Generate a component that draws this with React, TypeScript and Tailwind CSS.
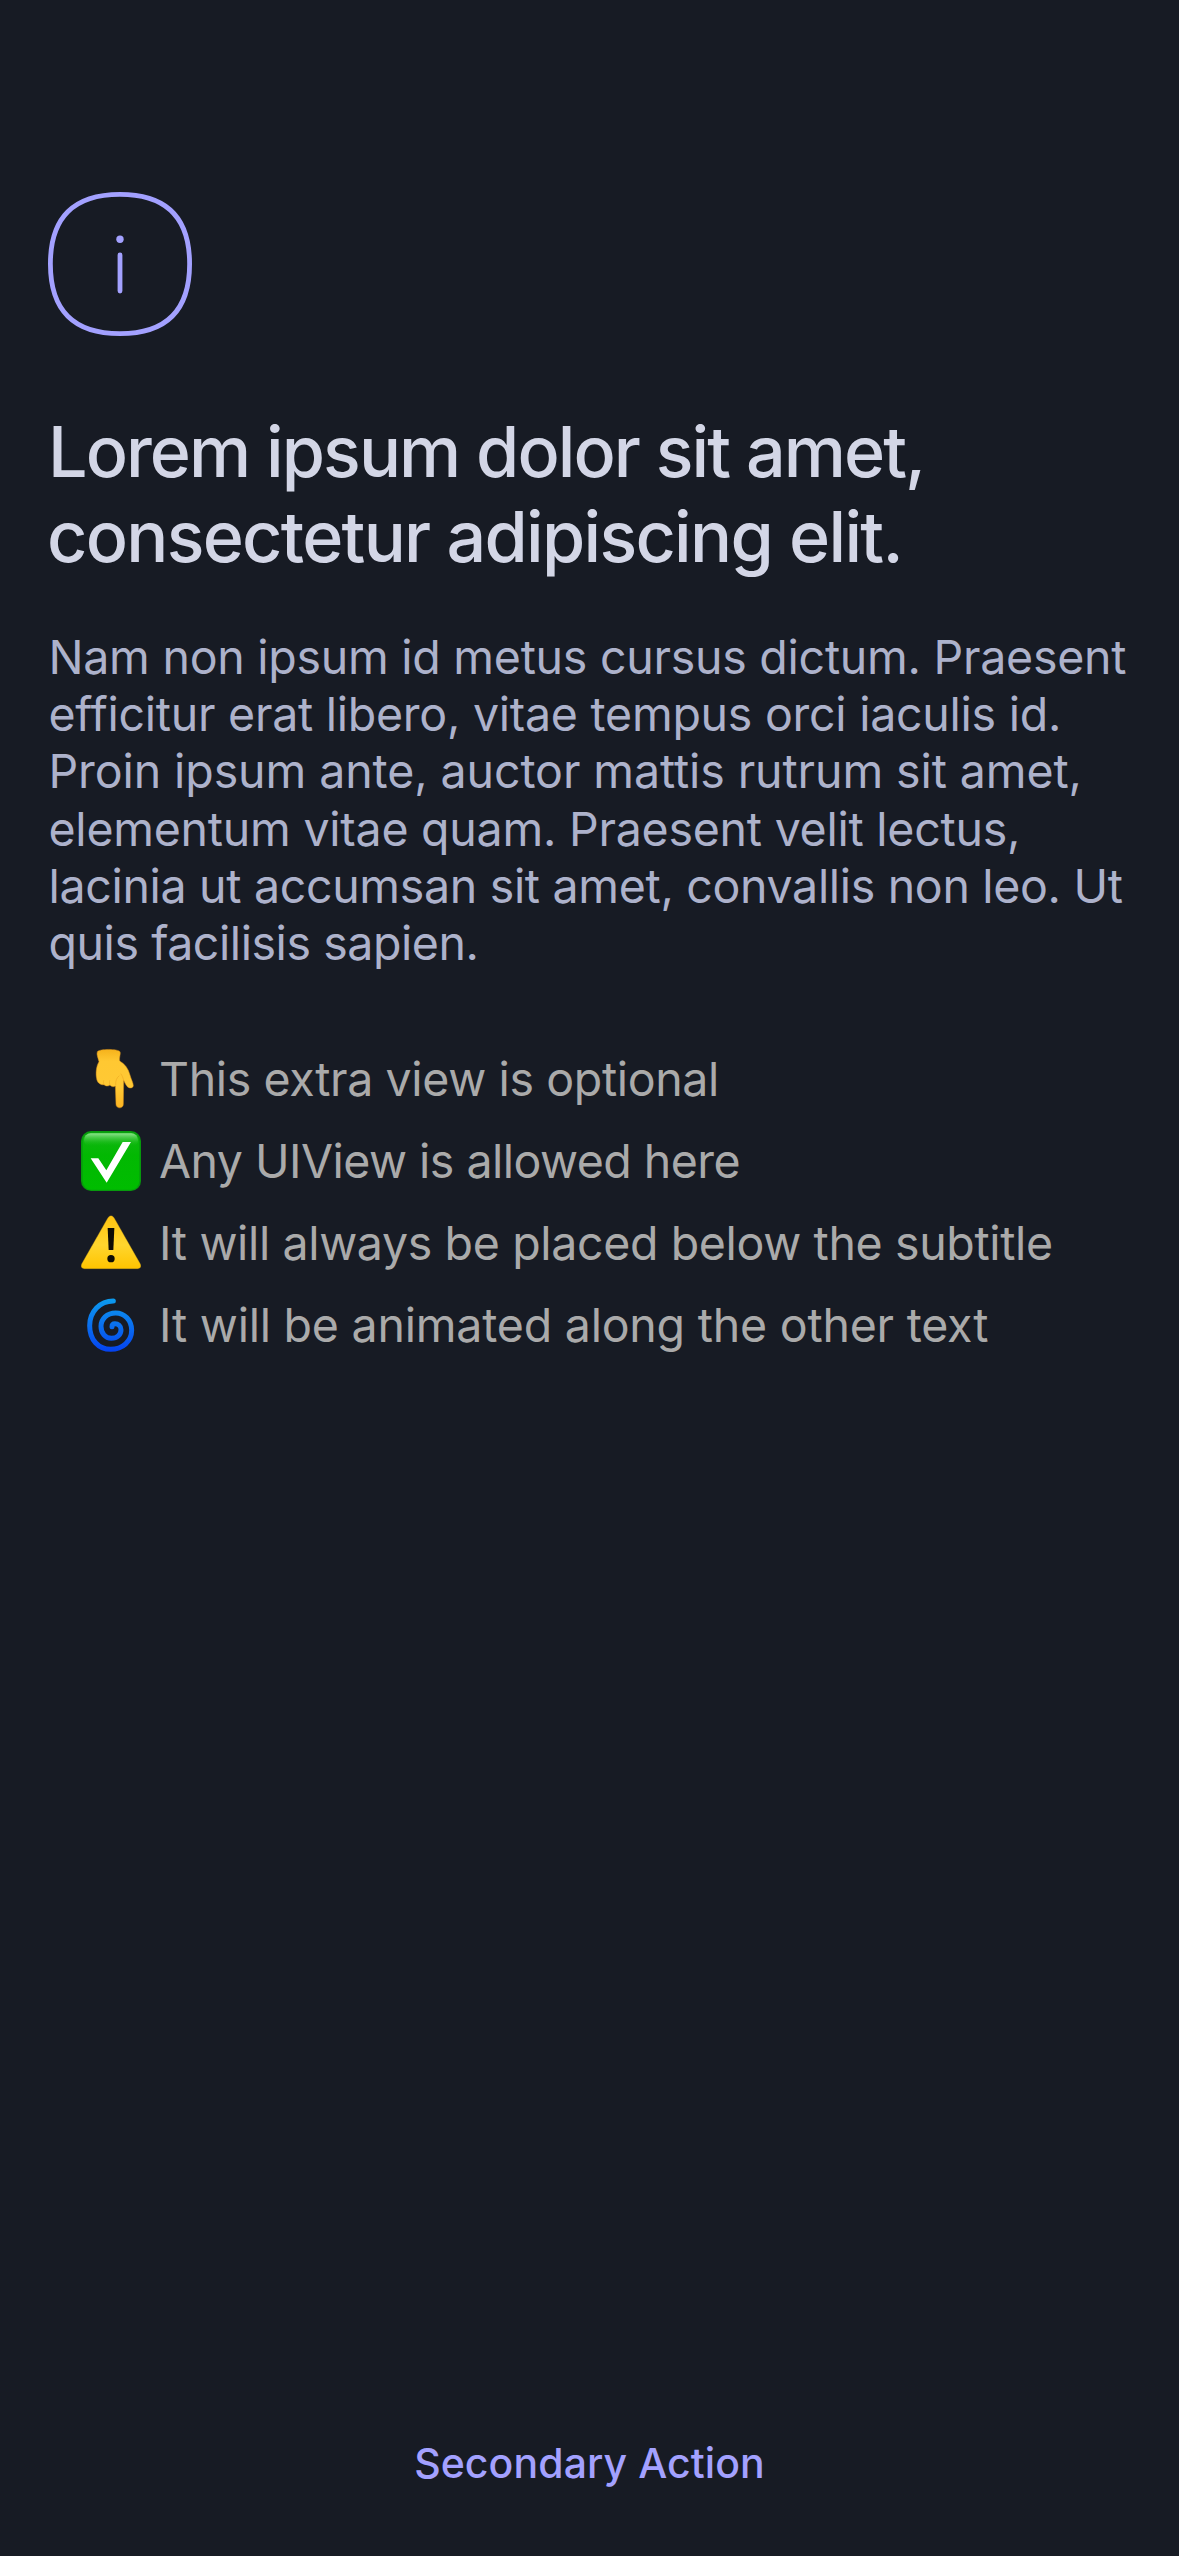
import type { ReactNode } from "react";

function InfoIcon() {
  return (
    <svg className="block size-36" viewBox="0 0 144 144" fill="none" stroke="#a3a1ff" strokeWidth="4.8">
      <path d="M72 2.4C118.4 2.4 141.6 25.6 141.6 72S118.4 141.6 72 141.6 2.4 118.4 2.4 72 25.6 2.4 72 2.4Z" />
      <path d="M72 63v36" strokeLinecap="round" />
      <circle cx="72" cy="47.3" r="3.7" fill="#a3a1ff" stroke="none" />
    </svg>
  );
}

function PointDownIcon() {
  return (
    <svg className="block h-[82px] w-[60px] shrink-0" viewBox="0 0 60 82">
      <defs>
        <linearGradient id="hand" x1="0" y1="0" x2="0" y2="1">
          <stop offset="0" stopColor="#f5b21c" />
          <stop offset="0.2" stopColor="#ffc832" />
          <stop offset="0.65" stopColor="#ffc934" />
          <stop offset="1" stopColor="#fdb523" />
        </linearGradient>
      </defs>
      <g transform="translate(-11 -3) scale(.33333)">
        <path
          d="M82 50C88 41 144 41 150 50C153 56 147 66 149 78C165 87 175 101 180 120C183 132 190 144 190 152C189 160 178 161 172 155C166 148 163 140 161 136L160 208C160 222 138 222 138 208L136 153C130 157 124 155 120 150C114 155 106 153 102 149C91 151 81 142 80 131C77 117 78 94 87 80C84 68 79 58 82 50Z"
          fill="url(#hand)"
          stroke="#d9901a"
          strokeWidth="1.5"
        />
        <path d="M137 150c-1-13 3-22 10-27M161 137c-2-9-4-15-8-20M120 150c-2-4-2-9-1-13M102 149c-2-4-2-8-1-12" fill="none" stroke="#f0ab22" strokeWidth="2" strokeLinecap="round" />
      </g>
    </svg>
  );
}

function CheckIcon() {
  return (
    <svg className="block h-[82px] w-[60px] shrink-0" viewBox="0 0 60 82">
      <defs>
        <linearGradient id="tile" x1="0" y1="0" x2="0" y2="1">
          <stop offset="0" stopColor="#12b512" />
          <stop offset="0.4" stopColor="#02b802" />
          <stop offset="1" stopColor="#00bd00" />
        </linearGradient>
        <linearGradient id="gloss" x1="0" y1="0" x2="0" y2="1">
          <stop offset="0" stopColor="#8be38b" />
          <stop offset="1" stopColor="#0cb80c" stopOpacity="0" />
        </linearGradient>
      </defs>
      <g transform="translate(-11 0) scale(.33333)">
        <rect x="33" y="33" width="180" height="180" rx="30" fill="#079a0d" />
        <rect x="38" y="38" width="170" height="171" rx="26" fill="url(#tile)" />
        <rect x="42" y="40" width="162" height="40" rx="20" fill="url(#gloss)" />
        <path d="M62 115H85L109 151L158 66H183L110 188Z" fill="#fff" />
      </g>
    </svg>
  );
}

function WarningIcon() {
  return (
    <svg className="block h-[82px] w-[60px] shrink-0" viewBox="0 0 60 82">
      <defs>
        <linearGradient id="sign" x1="0" y1="0" x2="0" y2="1">
          <stop offset="0" stopColor="#ffc410" />
          <stop offset="0.55" stopColor="#ffd62e" />
          <stop offset="1" stopColor="#ffc400" />
        </linearGradient>
      </defs>
      <g transform="translate(-11 3) scale(.33333)">
        <path d="M114 38Q123 27 132 38L211 177Q216 190 203 191H43Q30 190 35 177Z" fill="url(#sign)" stroke="#c99a14" strokeWidth="1" />
        <path d="M113 69H133L130 135H116Z" fill="#0d0c05" />
        <circle cx="123" cy="161" r="11" fill="#0d0c05" />
      </g>
    </svg>
  );
}

function CycloneIcon() {
  return (
    <svg className="block h-[82px] w-[60px] shrink-0" viewBox="0 0 60 82">
      <defs>
        <linearGradient id="swirl" gradientUnits="userSpaceOnUse" x1="0" y1="40" x2="0" y2="200">
          <stop offset="0" stopColor="#0c9cee" />
          <stop offset="0.5" stopColor="#0a70ee" />
          <stop offset="1" stopColor="#0442f0" />
        </linearGradient>
      </defs>
      <g transform="translate(-11 1) scale(.33333)">
        <path
          d="M130 48C90 48 59 80 59 122C59 164 85 193 122 193C158 193 185 168 185 136C185 105 163 84 137 84C111 84 93 102 93 124C93 145 106 160 124 160C142 160 153 148 153 134C153 123 144 116 135 116C129 116 126 120 126 125"
          fill="none"
          stroke="url(#swirl)"
          strokeWidth="15"
          strokeLinecap="round"
        />
      </g>
    </svg>
  );
}

function Row({ icon, className, children }: { icon: ReactNode; className: string; children: ReactNode }) {
  return (
    <li className="flex h-[82px] items-center gap-[18px]">
      {icon}
      <span className={className}>{children}</span>
    </li>
  );
}

export default function App() {
  return (
    <main className="flex h-[2556px] w-[1179px] flex-col overflow-hidden bg-[#171b24] pt-48 font-['Inter',sans-serif] whitespace-nowrap">
      <div className="px-12">
        <InfoIcon />
        <h1 className="mt-[73px] text-[70px] leading-[85px] font-medium text-[#d3d6e6]">
          <span className="block tracking-[-1.92px]">Lorem ipsum dolor sit amet,</span>
          <span className="-ml-px block tracking-[-1.71px]">consectetur adipiscing elit.</span>
        </h1>
        <p className="mt-[50px] ml-[0.5px] text-[46.5px] leading-[57.2px] text-[#adb2cb]">
          <span className="block tracking-[-0.26px]">Nam non ipsum id metus cursus dictum. Praesent</span>
          <span className="block tracking-[-0.255px]">efficitur erat libero, vitae tempus orci iaculis id.</span>
          <span className="block tracking-[-0.09px]">Proin ipsum ante, auctor mattis rutrum sit amet,</span>
          <span className="block tracking-[-0.24px]">elementum vitae quam. Praesent velit lectus,</span>
          <span className="block tracking-[-0.32px]">lacinia ut accumsan sit amet, convallis non leo. Ut</span>
          <span className="block tracking-[-0.44px]">quis facilisis sapien.</span>
        </p>
      </div>
      <ul className="mt-[65.8px] pl-[81px] text-[46.5px] leading-[82px] text-[#aaaaaa]">
        <Row icon={<PointDownIcon />} className="tracking-[-0.37px]">This extra view is optional</Row>
        <Row icon={<CheckIcon />} className="tracking-[-0.53px]">Any UIView is allowed here</Row>
        <Row icon={<WarningIcon />} className="tracking-[-0.36px]">It will always be placed below the subtitle</Row>
        <Row icon={<CycloneIcon />} className="tracking-[-0.22px]">It will be animated along the other text</Row>
      </ul>
      <button className="mx-auto mt-auto mb-[63px] h-[60px] text-[41px] leading-[60px] font-medium tracking-[0.08px] text-[#a3a1ff]">
        Secondary Action
      </button>
    </main>
  );
}
